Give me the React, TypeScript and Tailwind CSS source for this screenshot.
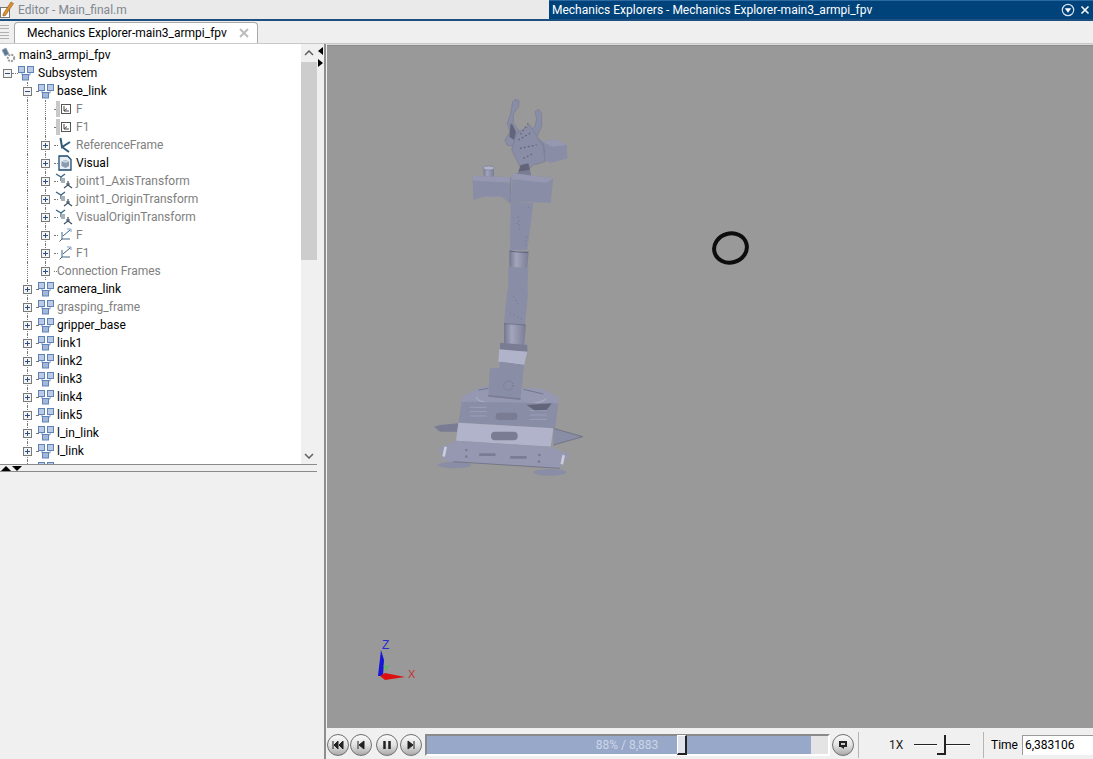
import React from "react";

const F = { fontFamily: '"Roboto","Liberation Sans",sans-serif' };

function Sub() {
  return (
    <svg width="16" height="15" viewBox="0 0 16 15" className="shrink-0">
      <path d="M4 6V9H8M12 6V9H8" fill="none" stroke="#7f9cc6" />
      <rect x="0.5" y="0.5" width="6" height="6" fill="#bccbe4" stroke="#5f83b8" />
      <rect x="9.5" y="0.5" width="6" height="6" fill="#bccbe4" stroke="#5f83b8" />
      <rect x="4.5" y="8.5" width="6" height="5.5" fill="#a3b7d8" stroke="#5f83b8" />
    </svg>
  );
}
function Sig() {
  return (
    <div className="flex items-center shrink-0">
      <div className="w-[4px] h-[16px] bg-[#c8c8c8]" />
      <svg width="10" height="10" viewBox="0 0 10 10" className="ml-[1px]">
        <rect x="0.5" y="0.5" width="9" height="9" fill="#fff" stroke="#555" />
        <path d="M3 2V7H8M3 7L6 4.5" fill="none" stroke="#444" />
      </svg>
    </div>
  );
}
function RefF() {
  return (
    <svg width="14" height="16" viewBox="0 0 14 16" className="shrink-0">
      <path d="M2.5 1L4 10L12 5M4 10L11 15" fill="none" stroke="#305a7a" strokeWidth="2" />
    </svg>
  );
}
function Vis() {
  return (
    <svg width="14" height="16" viewBox="0 0 14 16" className="shrink-0">
      <path d="M1 1H9.5L13 4.5V15H1Z" fill="#e8eef4" stroke="#1f4a6e" strokeWidth="1.3" />
      <path d="M3.5 6.5L7.5 5L11 6.5V11L7.5 13L3.5 11Z" fill="#8a9bb0" />
      <path d="M3.5 6.5L7.5 8L11 6.5L7.5 5Z" fill="#c4d0dd" />
    </svg>
  );
}
function Trans() {
  return (
    <svg width="18" height="16" viewBox="0 0 18 16" className="shrink-0 -ml-[3px]">
      <path d="M1 1L6 4L10 1M6 4V8" fill="none" stroke="#3c6482" strokeWidth="1.4" />
      <path d="M6 7H9M13 8V12L9 15M13 12L17 15M11 11H15" fill="none" stroke="#3c5060" strokeWidth="1.2" />
      <rect x="6" y="5" width="4" height="5" fill="#a8b0b8" />
    </svg>
  );
}
function Frame() {
  return (
    <svg width="14" height="14" viewBox="0 0 14 14" className="shrink-0">
      <path d="M4 4V11H12M4 11L1.5 13.5M5 8L12 2" fill="none" stroke="#3c6482" />
      <path d="M9 1H13V4" fill="none" stroke="#7f9cc6" />
    </svg>
  );
}
function Box({ minus }: { minus?: boolean }) {
  return (
    <div className="relative w-[9px] h-[9px] border border-[#7a7a7a] bg-[#f4f4f4] shrink-0">
      <div className="absolute left-[1px] top-[3px] w-[5px] h-[1px] bg-[#2c4f8a]" />
      {!minus && <div className="absolute left-[3px] top-[1px] w-[1px] h-[5px] bg-[#2c4f8a]" />}
    </div>
  );
}
function Guide({ on }: { on?: boolean }) {
  return (
    <div className="w-[18px] h-full shrink-0 flex justify-center">
      {on && <div className="h-full border-l border-dotted border-[#777]" />}
    </div>
  );
}
function Hook({ w }: { w: number }) {
  return <div className="h-0 border-t border-dotted border-[#777] shrink-0" style={{ width: w }} />;
}

type R = { t: string; d: 1 | 2 | 3; icon: React.ReactNode; gray?: boolean; leaf?: boolean; minus?: boolean };

const SUB = <Sub />;
const rows: R[] = [
  { t: "base_link", d: 2, icon: SUB, minus: true },
  { t: "F", d: 3, icon: <Sig />, gray: true, leaf: true },
  { t: "F1", d: 3, icon: <Sig />, gray: true, leaf: true },
  { t: "ReferenceFrame", d: 3, icon: <RefF />, gray: true },
  { t: "Visual", d: 3, icon: <Vis /> },
  { t: "joint1_AxisTransform", d: 3, icon: <Trans />, gray: true },
  { t: "joint1_OriginTransform", d: 3, icon: <Trans />, gray: true },
  { t: "VisualOriginTransform", d: 3, icon: <Trans />, gray: true },
  { t: "F", d: 3, icon: <Frame />, gray: true },
  { t: "F1", d: 3, icon: <Frame />, gray: true },
  { t: "Connection Frames", d: 3, icon: null, gray: true },
  { t: "camera_link", d: 2, icon: SUB },
  { t: "grasping_frame", d: 2, icon: SUB, gray: true },
  { t: "gripper_base", d: 2, icon: SUB },
  { t: "link1", d: 2, icon: SUB },
  { t: "link2", d: 2, icon: SUB },
  { t: "link3", d: 2, icon: SUB },
  { t: "link4", d: 2, icon: SUB },
  { t: "link5", d: 2, icon: SUB },
  { t: "l_in_link", d: 2, icon: SUB },
  { t: "l_link", d: 2, icon: SUB },
  { t: "", d: 2, icon: SUB },
];

function Row({ r }: { r: R }) {
  const txt = r.gray ? "text-[#808080]" : "text-black";
  return (
    <div className="flex items-center h-[18px]">
      <div className="w-[18px] shrink-0" />
      {r.d === 2 ? (
        <div className="relative w-[18px] h-full shrink-0 flex items-center justify-center">
          <div className="absolute left-[9px] top-0 h-full border-l border-dotted border-[#777]" />
          <div className="relative"><Box minus={r.minus} /></div>
        </div>
      ) : (
        <Guide on />
      )}
      {r.d === 2 ? (
        <>
          <Hook w={2} />
          <div className="w-[15px] flex items-center">{r.icon}</div>
          <span className={`ml-[4px] ${txt}`}>{r.t}</span>
        </>
      ) : (
        <>
          <div className="relative w-[18px] h-full shrink-0 flex items-center justify-center">
            <div className="absolute left-[9px] top-0 h-full border-l border-dotted border-[#777]" />
            {!r.leaf && <div className="relative"><Box /></div>}
          </div>
          {r.icon ? (
            <>
              <Hook w={r.leaf ? 2 : 4} />
              <div className={r.leaf ? "w-[20px] flex items-center" : "w-[14px] flex items-center"}>{r.icon}</div>
              <span className={`${r.leaf ? "" : "ml-[4px]"} ${txt}`}>{r.t}</span>
            </>
          ) : (
            <>
              <Hook w={3} />
              <span className={txt}>{r.t}</span>
            </>
          )}
        </>
      )}
    </div>
  );
}

function RoundBtn({ children, cls }: { children: React.ReactNode; cls?: string }) {
  return (
    <div className={`w-[22px] h-[22px] rounded-full border border-[#6f6f6f] bg-gradient-to-b from-[#fafafa] via-[#e2e2e2] to-[#aaaaaa] flex items-center justify-center shrink-0 ${cls ?? ""}`}>
      <svg width="12" height="10" viewBox="0 0 12 10">{children}</svg>
    </div>
  );
}

function Robot() {
  const a = "#8a8da6", b = "#9598b0", c = "#797c93", d = "#62657a", e = "#b0b3c9";
  return (
    <svg className="absolute left-0 top-0" width="766" height="682" viewBox="327 46 766 682">
      <defs>
        <filter id="s" x="-5%" y="-5%" width="110%" height="110%"><feGaussianBlur stdDeviation="0.45" /></filter>
        <linearGradient id="cyl" x1="0" x2="1" y1="0" y2="0">
          <stop offset="0" stopColor="#74778e" />
          <stop offset="0.35" stopColor="#a2a5bc" />
          <stop offset="1" stopColor="#7a7d94" />
        </linearGradient>
      </defs>
      <g filter="url(#s)">
        <g transform="translate(420 90) scale(0.33333)" strokeLinejoin="round">
          <polygon points="368,155 405,148 440,165 442,205 395,218 372,212" fill={a} />
          <polygon points="368,155 405,148 440,165 395,170" fill={b} />
          <polygon points="278,35 285,28 297,32 296,50 280,72 280,100 300,125 290,170 260,165 255,150 270,125 262,100 272,70" fill={a} stroke={c} strokeWidth="2" />
          <polygon points="272,100 268,140 282,150 288,125 278,105" fill={d} />
          <polygon points="345,65 355,58 365,70 365,110 350,140 370,160 375,190 340,170 325,125 345,110 350,85" fill={a} stroke={c} strokeWidth="2" />
          <polygon points="290,130 330,105 345,130 370,170 375,215 340,225 310,250 295,220 275,180" fill={a} stroke={c} strokeWidth="2" />
          <path d="M295 150L330 130M300 175L350 165M310 205L340 190M325 100L300 135" stroke={d} strokeWidth="4" strokeDasharray="5 7" fill="none" />
          <polygon points="295,245 330,240 335,262 285,265" fill={c} />
          <polygon points="302,225 325,220 330,240 295,245" fill={d} />
          <polygon points="190,232 222,232 222,268 192,268" fill="url(#cyl)" />
          <ellipse cx="206" cy="234" rx="17" ry="6" fill={e} stroke={c} strokeWidth="2" />
          <polygon points="158,258 275,262 270,340 245,320 190,320 160,330" fill={a} />
          <polygon points="158,258 275,262 272,278 160,272" fill={b} />
          <polygon points="280,250 400,265 392,338 270,335" fill={a} />
          <polygon points="280,250 400,265 380,278 275,268" fill={b} />
          <path d="M272 262L270 340" stroke={c} strokeWidth="2" />
          <polygon points="272,335 340,340 322,480 270,480" fill={a} />
          <path d="M295 380L300 420M325 350L330 360M320 440L315 470M290 400L300 405" stroke={d} strokeWidth="2" strokeDasharray="3 9" fill="none" />
          <polygon points="268,480 326,484 322,535 268,530" fill="url(#cyl)" />
          <path d="M270 484L324 488" stroke={d} strokeWidth="3" />
          <polygon points="265,530 325,535 322,600 265,600" fill={a} />
        </g>
        <g transform="translate(420 290) scale(0.33333)" strokeLinejoin="round">
          <polygon points="262,0 325,0 315,105 252,100" fill={a} />
          <path d="M280 20L300 50M270 70L310 90" stroke={d} strokeWidth="2" strokeDasharray="3 9" fill="none" />
          <polygon points="252,100 318,104 312,170 252,170" fill="url(#cyl)" />
          <path d="M252 101L316 105" stroke={d} strokeWidth="2" />
          <polygon points="240,158 322,165 322,185 240,182" fill={c} />
          <polygon points="238,178 322,185 312,225 235,215" fill={e} />
          <polygon points="210,235 238,235 240,215 312,225 302,325 205,315" fill={a} />
          <circle cx="265" cy="287" r="14" fill="none" stroke={d} strokeWidth="3" strokeDasharray="2 5" />
          <polygon points="125,320 185,290 360,295 415,320 415,345 390,355 120,340" fill={b} />
          <polygon points="210,235 238,235 240,215 312,225 302,325 205,315" fill={a} />
          <circle cx="265" cy="287" r="14" fill="none" stroke={d} strokeWidth="3" strokeDasharray="2 5" />
          <path d="M170 320A105 22 0 0 0 380 325" fill="none" stroke={e} strokeWidth="3" />
          <path d="M175 300L205 295M310 298L370 312" fill="none" stroke={d} strokeWidth="2" />
          <polygon points="205,315 302,325 302,330 205,320" fill={c} />
          <polygon points="125,335 415,340 405,415 115,398" fill={a} />
          <polygon points="320,345 395,340 380,360 345,362" fill={d} />
          <path d="M150 352H200M150 365H200M150 378H200M330 362H380M330 375H380M330 388H380" stroke={e} strokeWidth="1.5" />
          <rect x="227" y="368" width="65" height="22" rx="10" fill={c} />
          <polygon points="42,410 60,405 115,400 112,425 60,425" fill={c} />
          <polygon points="400,415 488,440 400,465" fill={a} />
          <path d="M400 415L488 440L400 465" fill="none" stroke={d} strokeWidth="2" />
          <polygon points="115,398 400,415 392,470 108,452" fill={e} />
          <rect x="213" y="425" width="80" height="26" rx="12" fill={c} />
          <ellipse cx="103" cy="525" rx="50" ry="10" fill={a} />
          <ellipse cx="390" cy="547" rx="50" ry="10" fill={a} />
          <polygon points="55,475 108,452 392,470 450,495 420,535 100,515 70,510" fill={b} />
          <path d="M100 515L420 535" stroke={d} strokeWidth="2" />
          <rect x="70" y="470" width="8" height="30" fill="#ccced9" transform="rotate(12 74 485)" />
          <rect x="424" y="495" width="8" height="28" fill="#ccced9" transform="rotate(12 428 510)" />
          <rect x="177" y="490" width="50" height="8" rx="3" fill={c} />
          <rect x="270" y="498" width="50" height="8" rx="3" fill={c} />
          <circle cx="139" cy="480" r="4" fill={c} /><circle cx="139" cy="500" r="4" fill={c} />
          <circle cx="358" cy="495" r="4" fill={c} /><circle cx="357" cy="515" r="4" fill={c} />
        </g>
      </g>
      <ellipse cx="730.5" cy="248" rx="16.5" ry="14.5" fill="none" stroke="#0d0d0d" strokeWidth="4" transform="rotate(-15 730.5 248)" />
      <polygon points="378,676 381,650 384,660 383,676" fill="#1515d8" />
      <polygon points="380,676 385,673 405,677 385,680" fill="#dc1010" />
      <text x="382" y="649" fontSize="12" fill="#2a2ad0" fontFamily="Liberation Sans">Z</text>
      <text x="408" y="678" fontSize="11" fill="#c83030" fontFamily="Liberation Sans">X</text>
      <text x="383" y="671" fontSize="9" fill="#30d030" fontFamily="Liberation Sans">Y</text>
    </svg>
  );
}

export default function App() {
  return (
    <div className="w-[1093px] h-[759px] overflow-hidden flex flex-col bg-[#f0f0f0] text-[12px] leading-[18px]" style={F}>
      <div className="flex h-[19px] shrink-0">
        <div className="w-[549px] flex items-center bg-[#eaeaea]">
          <svg width="14" height="17" viewBox="0 0 14 17" className="shrink-0">
            <rect x="0.5" y="6.5" width="9" height="10" fill="#fff" stroke="#777" />
            <path d="M3 13L11 1L13.5 2.5L5.5 14.5L3 15Z" fill="#e0902a" stroke="#8a5a20" strokeWidth="0.6" />
          </svg>
          <span className="ml-[4px] text-[#808890]">Editor - Main_final.m</span>
        </div>
        <div className="flex-1 flex items-center bg-[#00427a] border-t border-[#2a6aa0] text-white">
          <span className="ml-[3px] flex-1">Mechanics Explorers - Mechanics Explorer-main3_armpi_fpv</span>
          <svg width="14" height="14" viewBox="0 0 14 14" className="mr-[5px]">
            <circle cx="7" cy="7" r="5.7" fill="none" stroke="#d5e2ee" strokeWidth="1.2" />
            <path d="M3.8 5.2H10.2L7 9.8Z" fill="#fff" />
          </svg>
          <svg width="10" height="10" viewBox="0 0 10 10" className="mr-[3px]">
            <path d="M1.5 1.5L8.5 8.5M8.5 1.5L1.5 8.5" stroke="#fff" strokeWidth="1.6" />
          </svg>
        </div>
      </div>
      <div className="h-[24px] shrink-0 flex items-end border-t-2 border-[#1d4f80] bg-[#efefef]">
        <div className="w-[9px] h-[14px] mb-[4px] mr-[5px] flex flex-col justify-between">
          <div className="h-[1px] bg-[#b0b0b0]" /><div className="h-[1px] bg-[#b0b0b0]" /><div className="h-[1px] bg-[#b0b0b0]" /><div className="h-[1px] bg-[#b0b0b0]" /><div className="h-[1px] bg-[#b0b0b0]" />
        </div>
        <div className="w-[244px] h-[21px] bg-white border border-b-0 border-[#a8a8a8] rounded-t-[4px] flex items-center pl-[12px]">
          <span className="text-black flex-1">Mechanics Explorer-main3_armpi_fpv</span>
          <svg width="10" height="10" viewBox="0 0 10 10" className="mr-[8px]">
            <path d="M1 1L9 9M9 1L1 9" stroke="#bcbcbc" strokeWidth="2" />
          </svg>
        </div>
      </div>
      <div className="flex-1 min-h-0 flex border-t border-[#c8c8c8]">
        <div className="w-[317px] shrink-0 flex flex-col">
          <div className="h-[421px] shrink-0 bg-white flex border-b border-[#8a8a8a] overflow-hidden">
            <div className="flex-1 min-w-0 overflow-hidden pt-[2px]">
              <div className="flex items-center h-[18px]">
                <svg width="17" height="16" viewBox="0 0 17 16" className="shrink-0">
                  <path d="M2 3L6 1L9 7L5 9Z" fill="#5e7890" stroke="#9ab" strokeWidth="0.8" />
                  <circle cx="11" cy="11" r="3.2" fill="none" stroke="#9a9a9a" strokeWidth="2" strokeDasharray="2 1" />
                </svg>
                <span className="ml-[2px] text-black">main3_armpi_fpv</span>
              </div>
              <div className="flex items-center h-[18px]">
                <div className="ml-[3px]"><Box minus /></div>
                <Hook w={6} />
                <Sub />
                <span className="ml-[4px] text-black">Subsystem</span>
              </div>
              {rows.map((r, i) => <Row key={i} r={r} />)}
            </div>
            <div className="w-[16px] shrink-0 bg-[#f0f0f0] flex flex-col items-center">
              <svg width="10" height="6" viewBox="0 0 10 6" className="mt-[6px]">
                <path d="M1 5L5 1L9 5" fill="none" stroke="#606060" strokeWidth="1.5" />
              </svg>
              <div className="w-full h-[198px] bg-[#cdcdcd] mt-[6px]" />
              <div className="flex-1" />
              <svg width="10" height="6" viewBox="0 0 10 6" className="mb-[5px]">
                <path d="M1 1L5 5L9 1" fill="none" stroke="#606060" strokeWidth="1.5" />
              </svg>
            </div>
          </div>
          <div className="h-[7px] shrink-0 flex items-center gap-[1px] pl-[1px] border-b border-[#8a8a8a] bg-[#f0f0f0]">
            <div className="w-0 h-0 border-x-[5px] border-x-transparent border-b-[5px] border-b-black" />
            <div className="w-0 h-0 border-x-[5px] border-x-transparent border-t-[5px] border-t-black" />
          </div>
          <div className="flex-1 bg-[#f0f0f0]" />
        </div>
        <div className="w-[10px] shrink-0 flex">
          <div className="w-[1px]" />
          <div className="w-[6px] pt-[3px] flex flex-col gap-[4px]">
            <div className="w-0 h-0 border-y-[4px] border-y-transparent border-r-[5px] border-r-black" />
            <div className="w-0 h-0 border-y-[4px] border-y-transparent border-l-[5px] border-l-black" />
          </div>
          <div className="w-[2px] bg-[#8e8e8e]" />
          <div className="w-[1px] bg-[#f0f0f0]" />
        </div>
        <div className="flex-1 min-w-0 flex flex-col">
          <div className="h-[1px] shrink-0 bg-[#dcdcdc]" />
          <div className="relative h-[683px] shrink-0 bg-[#999999] border-t border-[#8a8a8a]">
            <Robot />
          </div>
          <div className="flex-1 flex items-center bg-[#f0f0f0] min-w-0 pt-[3px]">
            <RoundBtn><path d="M1 1V9M6 1L2 5L6 9ZM11 1L7 5L11 9Z" fill="#222" stroke="#222" /></RoundBtn>
            <RoundBtn cls="ml-[1px]"><path d="M3 1V9M9 1L4 5L9 9Z" fill="#222" stroke="#222" /></RoundBtn>
            <RoundBtn cls="ml-[4px]"><path d="M3.5 1V9M8.5 1V9" stroke="#222" strokeWidth="2.5" /></RoundBtn>
            <RoundBtn cls="ml-[2px]"><path d="M3 1L8 5L3 9ZM9 1V9" fill="#222" stroke="#222" /></RoundBtn>
            <div className="relative ml-[3px] w-[405px] h-[22px] bg-[#e4e4e4] border-t-2 border-l-2 border-[#8a8a8a] border-r-2 border-r-white border-b-2 border-b-white shrink-0">
              <div className="h-full w-[384px] bg-[#98a8c8] flex items-center justify-center">
                <span className="text-[#ccd6e8] ml-[16px]">88% / 8,883</span>
              </div>
              <div className="absolute left-[250px] top-[-1px] w-[10px] h-[20px] bg-[#dfe3ec] border-r-2 border-b-2 border-[#222] border-l border-t border-l-white border-t-white" />
            </div>
            <RoundBtn cls="ml-[2px]"><path d="M2 1H10V7H7V9L4 7H2Z" fill="#222" /><rect x="4" y="3" width="4" height="2" fill="#ccc" /></RoundBtn>
            <div className="w-[1px] h-[26px] bg-[#b5b5b5] ml-[4px]" />
            <span className="ml-[30px] w-[25px] text-[#222]">1X</span>
            <div className="relative w-[56px] h-[20px] flex items-center">
              <div className="w-full h-[2px] bg-[#222] border-b border-white" />
              <div className="absolute left-[23px] top-[0px] w-[9px] h-[20px] bg-[#f0f0f0] border-r-2 border-b-2 border-[#222]" />
            </div>
            <div className="w-[1px] h-[26px] bg-[#b5b5b5] ml-[13px]" />
            <span className="ml-[7px] text-black">Time</span>
            <div className="ml-[4px] flex-1 h-[20px] bg-white border-l border-t border-[#9a9a9a] pl-[2px] text-black leading-[19px] whitespace-nowrap overflow-hidden">6,383106</div>
          </div>
        </div>
      </div>
    </div>
  );
}
